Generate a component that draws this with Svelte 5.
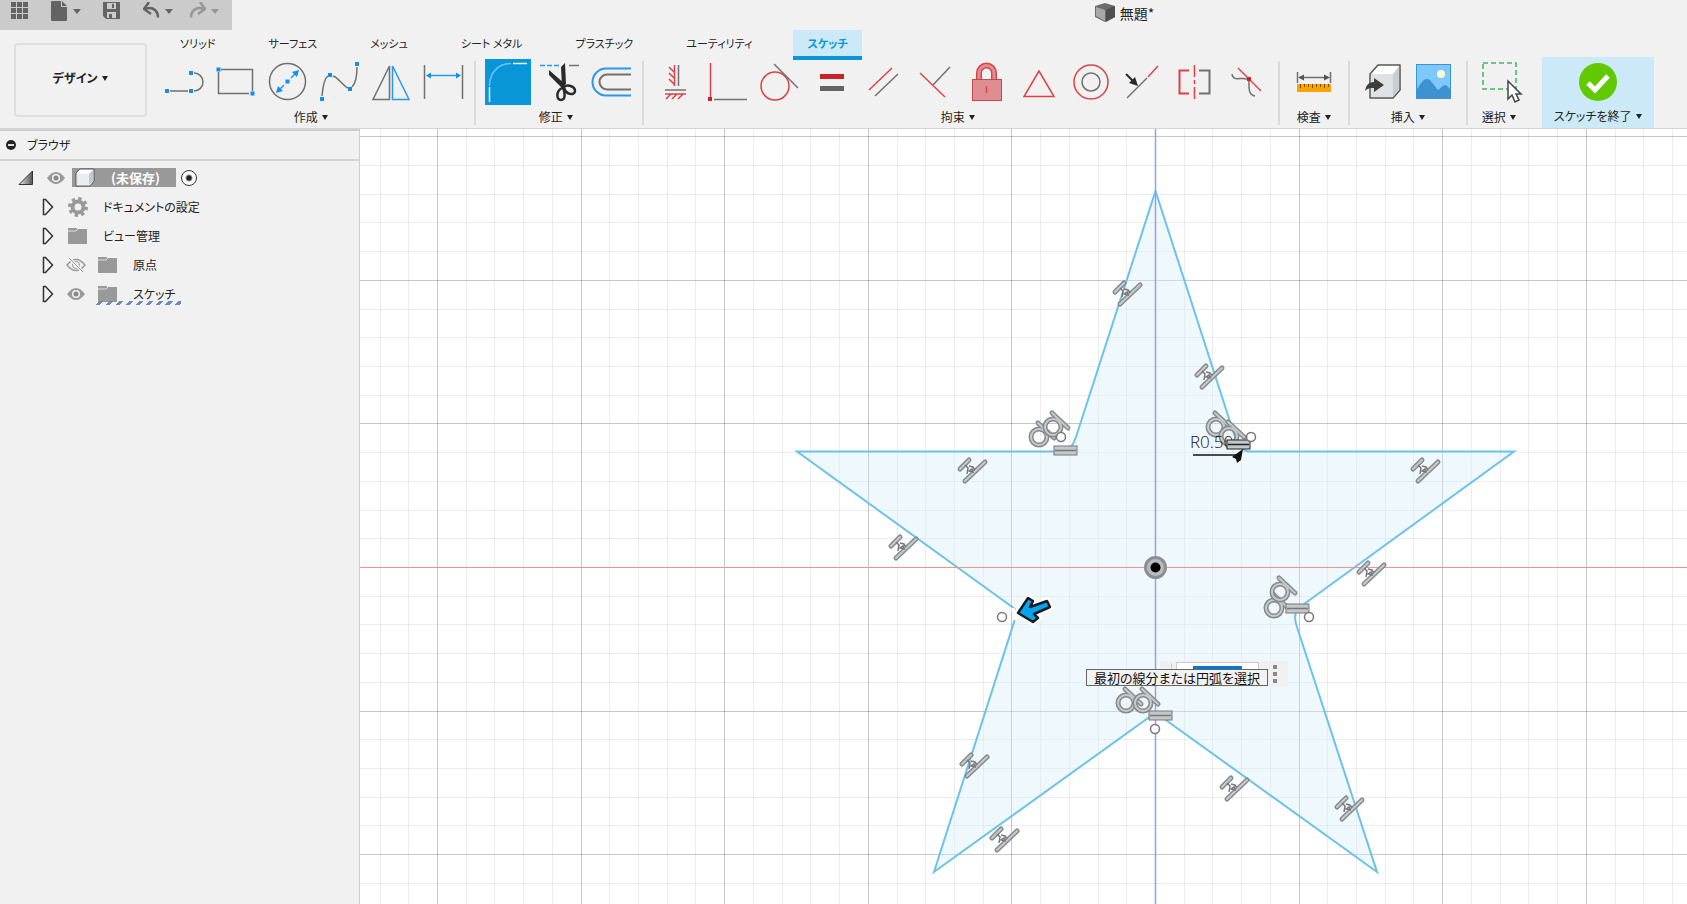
<script>
	const tabs = ['ソリッド', 'サーフェス', 'メッシュ', 'シート メタル', 'プラスチック', 'ユーティリティ', 'スケッチ'];
	let active = 'スケッチ';

	// icon art is drawn on a 52x46 box: g = grey, b = blue, r = red strokes, *f = filled
	const dot = (x, y) => `<rect class="bf" x="${x - 2}" y="${y - 2}" width="4" height="4"/>`;

	const groups = [
		{
			label: '作成',
			tools: [
				{ name: '線分', art: '<path class="g" d="M12 32H30M36 32a9 9 0 0 0 0-18"/>' + dot(9, 32) + dot(33, 32) + dot(33, 14) },
				{ name: '長方形', art: '<path class="g" d="M11 10.500H42.500V32M39 34.500H8.500V13"/>' + dot(8.5, 10.5) + dot(42.5, 34.5) },
				{ name: '円', art: '<circle class="g" cx="25.500" cy="22.500" r="18"/><path class="b" d="M29 19l5-5M22 26l-5 5"/><path class="bf" d="M37 11l-2 7-5-5zM14 34l2-7 5 5z"/>' + dot(25.5, 22.5) },
				{ name: 'スプライン', art: '<path class="g" d="M8 37C9 26 11 19 14 17M19 17c6 2 10 10 15 12M38 28c3-3 5-10 5-20"/>' + dot(8, 40) + dot(16, 16) + dot(36, 30) + dot(43, 5) },
				{ name: 'ミラー', art: '<path class="g" d="M23.500 7V40.500H7z"/><path class="b" d="M26.500 7V40.500H43z"/>' },
				{ name: 'スケッチ寸法', art: '<path class="g" d="M6.500 6V40M44.500 6V40"/><path class="b" d="M10 16.500H41"/><path class="bf" d="M8 16.500l5-3v6zM43 16.500l-5-3v6z"/>' }
			]
		},
		{
			label: '修正',
			tools: [
				{ name: 'フィレット', on: true, art: '<rect x="4" y="0" width="46" height="46" fill="#0896d9"/><path class="lb" d="M8.500 27C8.500 14 17 4.500 30 4.500"/><path class="w" d="M8.500 28V43M32 4.500H46"/>' },
				{ name: 'トリム', art: '<path class="b" stroke-dasharray="5 2" d="M7 6.500H27"/><path class="g" d="M36 6.500H46"/><path fill="#2a2a2a" d="M28 8l4-4 1 21-4 3zM16 11l16 14-2 5-14-14z"/><path fill="none" stroke="#2a2a2a" stroke-width="2.500" d="M29 29c-6 3-6 12-1 12s4-8 2-12zM31 28c1 8 11 9 11 4s-8-7-11-4z"/>' },
				{ name: 'オフセット', art: '<path class="b t" d="M46 9.500H21a13.500 13.500 0 0 0 0 27h25"/><path class="g t" d="M46 15.500H22a7.500 7.500 0 0 0 0 15h24"/>' }
			]
		},
		{
			label: '拘束',
			tools: [
				{ name: '水平/垂直', art: '<path class="g" d="M29.500 6V27M16 31H37"/><path class="r" d="M25.500 6V27M25 13l-5-5M25 19l-5-5M25 25l-5-5M16 35H37M22 35l-5 5M28 35l-5 5M34 35l-5 5"/>' },
				{ name: '一致', art: '<path class="r" d="M9.500 4V38"/><path class="g" d="M13 40.500H46"/><rect class="rf" x="7" y="38" width="4" height="4"/>' },
				{ name: '接線', art: '<circle class="r" cx="22" cy="27" r="14"/><path class="g" d="M21 5L45 29"/>' },
				{ name: '等しい', art: '<rect class="rf" x="15" y="15" width="24" height="5"/><rect fill="#636363" x="15" y="27" width="24" height="5"/>' },
				{ name: '平行', art: '<path class="r" d="M12 31L35 9"/><path class="g" d="M18 37L41 15"/>' },
				{ name: '直交', art: '<path class="r" d="M11 14L36 38"/><path class="g" d="M41 8L24 26"/>' },
				{ name: '固定', art: '<path fill="none" stroke="#d0464b" stroke-width="6" d="M18 20V14a7.500 7.500 0 0 1 15 0v6"/><path fill="none" stroke="#e48d90" stroke-width="3" d="M18 20V14a7.500 7.500 0 0 1 15 0v6"/><rect x="11.500" y="20.500" width="29" height="21" fill="#de8d90" stroke="#c9484d"/><path class="r" d="M25.500 27V34"/>' },
				{ name: '中点', art: '<path class="r" d="M26 12L11 37.500H41z"/>' },
				{ name: '同心円', art: '<circle class="r" cx="26" cy="23" r="17"/><circle class="g" cx="26" cy="23" r="9"/>' },
				{ name: '同一直線上', art: '<path class="g" d="M10 39L30 19"/><path class="r" d="M31 18L41 7"/><path fill="none" stroke="#2a2a2a" stroke-width="2" d="M9 15l7 7"/><path fill="#2a2a2a" d="M21 27l-9-3 6-6z"/>' },
				{ name: '対称', art: '<path class="r t" d="M20 11.500H10.500V34.500H20"/><path class="r" d="M25.500 6V18M25.500 21V25M25.500 28V40"/><path class="g t" d="M30 11.500H40.500V34.500H30"/>' },
				{ name: '曲率', art: '<path class="g" d="M11 15c1 8 9 3 15 5M28 22c0 6-1 14 6 15"/><path class="r" d="M17 9L40 32"/><rect class="rf" x="26" y="18" width="4" height="4"/>' }
			]
		},
		{
			label: '検査',
			size: 'pad',
			tools: [
				{ name: '計測', art: '<path class="g" d="M9.500 13V24M42.500 13V24M12 18.500H40"/><path fill="#555" d="M10 18.500l6-3v6zM42 18.500l-6-3v6z"/><rect x="9" y="25" width="34" height="8" fill="#f9a400"/><path stroke="#7a4c00" d="M12.500 25v4M16.500 25v3M20.500 25v3M24.500 25v4M28.500 25v3M32.500 25v3M36.500 25v4M40.500 25v3"/>' }
			]
		},
		{
			label: '挿入',
			size: 'pad mid',
			tools: [
				{ name: '派生を挿入', art: '<path d="M12 15l8-9H42V31l-7 8H12z" fill="#fff" stroke="#555" stroke-width="1.500" stroke-linejoin="round"/><path d="M13 15H35V38H13z" fill="#dfe2e5"/><path d="M35 15l6-8v24l-6 7z" fill="#c9cdd1"/><path fill="#3d3d3d" d="M7 32c1-6 4-9 9-9v-4l10 7-10 7v-4c-4 0-6 0-9 3z"/>' },
				{ name: 'キャンバス', art: '<rect x="8.500" y="5.500" width="34" height="34" fill="#7cc8ff" stroke="#3b93d6"/><path d="M9 30c3-4 6-10 10-10s8 8 11 11c3-2 5-5 7-5s4 3 5 4v9H9z" fill="#3d92cf"/><circle cx="33" cy="15" r="4" fill="#fffbd0"/>' }
			]
		},
		{
			label: '選択',
			size: 'pad small',
			tools: [
				{ name: '選択', art: '<rect x="7" y="4" width="33" height="26" fill="none" stroke="#39b860" stroke-width="1.500" stroke-dasharray="5 3"/><path d="M32 22V40l4-4 3 7 4-2-3-6h5z" fill="#fff" stroke="#444" stroke-width="1.500"/>' }
			]
		}
	];

	const tree = [
		{ name: 'ドキュメントの設定', icon: 'gear' },
		{ name: 'ビュー管理', icon: 'folder' },
		{ name: '原点', icon: 'folder', eye: 'off' },
		{ name: 'スケッチ', icon: 'folder', eye: 'on', marked: true }
	];

	// everything on the canvas is measured from the sketch origin
	const step = 28.72;
	const lines = Array.from({ length: 101 }, (_, i) => i - 50);
	const pos = (n) => Math.round(n * step) + 0.5;

	const midpoints = [
		[-28, -274], [54, -191], [-183, -97], [270, -97], [-252, -20],
		[216, 6], [-181, 198], [-151, 272], [79, 221], [194, 241]
	];
	const tangents = [
		[-116, -130], [-102, -140], [61, -140], [74, -131],
		[119, 41], [125, 25], [-29, 136], [-12, 136]
	];
	const equals = [[-101, -121], [72, -127, true], [131, 37], [-6, 144]];
	const centers = [[-94, -130], [96, -130], [-153, 50], [154, 50], [0, 162]];
</script>

{#snippet eye(off)}
	<svg class="eye" width="20" height="16" viewBox="0 0 20 16">
		{#if off}
			<path d="M1 8q9-11 18 0q-9 11-18 0z" fill="none" stroke="#999" stroke-width="1.500" />
			<circle cx="10" cy="8" r="3.500" fill="none" stroke="#999" />
			<path d="M3 1L17 15" stroke="#f1f1f1" stroke-width="3" />
			<path d="M3 1L17 15" stroke="#999" />
		{:else}
			<path d="M1 8q9-12 18 0q-9 12-18 0z" fill="#999" />
			<circle cx="10" cy="8" r="4" fill="#f1f1f1" />
			<circle cx="10" cy="8" r="2.500" fill="#888" />
		{/if}
	</svg>
{/snippet}

<div class="app">
	<header>
		<div class="top">
			<nav class="quick">
				<button aria-label="データ パネル">
					<svg width="18" height="18"><path fill="#636363" d="M0 0h5v5H0zM6 0h5v5H6zM12 0h5v5h-5zM0 6h5v5H0zM6 6h5v5H6zM12 6h5v5h-5zM0 12h5v5H0zM6 12h5v5H6zM12 12h5v5h-5z" /></svg>
				</button>
				<button class="menu" aria-label="ファイル">
					<svg width="17" height="20"><path fill="#636363" d="M0 1q0-1 1-1h9v6h6v13q0 1-1 1H1q-1 0-1-1zM11 0l5 5h-5z" /></svg>
					<span class="caret"></span>
				</button>
				<button class="save" aria-label="保存">
					<svg width="18" height="18"><path fill="#636363" fill-rule="evenodd" d="M0 0h17v17H3l-3-3zM4 1v6h9V1zM4 10v6h9v-6z" /><path fill="#636363" d="M9 2h2v4H9zM6 12h3v4H6z" /></svg>
				</button>
				<button class="menu" aria-label="元に戻す">
					<svg width="17" height="18"><path d="M3 6.500c8-2 12 3 12 9" fill="none" stroke="#636363" stroke-width="2.500" /><path d="M6 0L1 7l7 5" fill="none" stroke="#636363" stroke-width="2.500" /></svg>
					<span class="caret"></span>
				</button>
				<button class="menu dim" aria-label="やり直し">
					<svg width="17" height="18"><path d="M14 6.500c-8-2-12 3-12 9" fill="none" stroke="#636363" stroke-width="2.500" /><path d="M11 0l5 7-7 5" fill="none" stroke="#636363" stroke-width="2.500" /></svg>
					<span class="caret"></span>
				</button>
			</nav>
			<div class="title">
				<svg width="20" height="19"><path fill="#6b6b6b" d="M0 3l10-3 10 3v11l-10 5-10-5z" /><path fill="#a8a8a8" d="M1 4l9 3v11l-9-5z" /><path fill="#4f4f4f" d="M11 7l9-4v11l-9 5z" /></svg>
				<span>無題*</span>
			</div>
		</div>

		<div class="ribbon">
			<button class="workspace">デザイン <span class="caret"></span></button>
			<div class="panels">
				<nav class="tabs">
					{#each tabs as tab}
						<button class:active={tab === active} on:click={() => (active = tab)}>{tab}</button>
					{/each}
				</nav>
				<div class="groups">
					{#each groups as group}
						<section class="group {group.size ?? ''}">
							<div class="tools">
								{#each group.tools as tool}
									<button class="tool" aria-label={tool.name} aria-pressed={!!tool.on}>
										<svg width="52" height="46" viewBox="0 0 52 46">{@html tool.art}</svg>
									</button>
								{/each}
							</div>
							<button class="label">{group.label} <span class="caret"></span></button>
						</section>
					{/each}
					<button class="finish">
						<svg width="46" height="46"><circle cx="23" cy="23" r="19" fill="#62c900" /><path d="M13 24l7 7 13-14" fill="none" stroke="#fff" stroke-width="5" /></svg>
						<span class="label">スケッチを終了 <span class="caret"></span></span>
					</button>
				</div>
			</div>
		</div>
	</header>

	<main>
		<aside>
			<h2>
				<svg width="12" height="12"><circle cx="6" cy="6" r="5" fill="#222" /><path d="M3 6h6" stroke="#ddd" stroke-width="2" /></svg>
				ブラウザ
			</h2>
			<ul>
				<li class="root">
					<svg width="16" height="16"><defs><linearGradient id="fold"><stop offset="0" stop-color="#eee" /><stop offset="1" stop-color="#555" /></linearGradient></defs><path d="M1 14.500L14.500 1V14.500z" fill="url(#fold)" stroke="#333" /></svg>
					{@render eye(false)}
					<span class="doc">
						<svg width="20" height="19"><path d="M1 5l4-4h14v12l-4 5H1z" fill="#fff" stroke="#555" stroke-linejoin="round" /><path d="M2 6h12v11H2z" fill="#e9edf0" /><path d="M14 6l4-4v11l-4 4z" fill="#c3c8cc" /></svg>
						<b>(未保存)</b>
					</span>
					<input type="radio" aria-label="コンポーネントをアクティブ化" checked />
				</li>
				{#each tree as node}
					<li>
						<svg width="12" height="18"><path d="M1.500 1.500h2l7 7.500-7 7.500h-2z" fill="#f4f4f4" stroke="#333" stroke-width="1.500" /></svg>
						{#if node.eye}{@render eye(node.eye === 'off')}{/if}
						<span class="node" class:marked={node.marked}>
							{#if node.icon === 'gear'}
								<svg width="20" height="20"><circle cx="10" cy="10" r="8" fill="none" stroke="#999" stroke-width="4" stroke-dasharray="3.140 3.140" /><circle cx="10" cy="10" r="5.500" fill="none" stroke="#999" stroke-width="4" /></svg>
							{:else}
								<svg width="20" height="16"><path d="M0 0h8l2 1H19V16H0z" fill="#999" /><path d="M0 3h8l2-2" fill="none" stroke="#ddd" /></svg>
							{/if}
							{node.name}
						</span>
					</li>
				{/each}
			</ul>
		</aside>

		<div class="canvas">
			<svg class="sketch">
				<defs>
					<g id="mid">
						<path class="edge" d="M-12-1l9-9M-7 11L13-8" />
						<path class="core" d="M-12-1l9-9M-7 11L13-8" />
						<path d="M-7-5l3 3-1 6M-3-4l4 1 2 3M-3 1l3-2 1 3z" fill="none" stroke="#777" stroke-width="1.500" />
					</g>
					<g id="tan">
						<circle class="edge" r="8" />
						<path class="edge" d="M-1-14L15 1" />
						<circle class="core" r="8" />
						<path class="core" d="M-1-14L15 1" />
					</g>
				</defs>
				<g transform="translate(795 438)">
					{#each lines as n}
						<path class="grid" class:major={n % 5 === 0} d="M{pos(n)}-2000V2000M-2000 {pos(n)}H2000" />
					{/each}
					<path class="star" d="M.5-376L80-130Q84.500-115.500 95-115.500H359L145 40Q137 46 142 60L222 305L8 151Q0 144-7 151L-221 305L-139 49Q-137 45-140 42L-358-115.500H-93Q-84-115.500-79-130Z" />
					<path d="M-142 41l3 12" stroke="#fff" stroke-width="4" />
					<path d="M-2000 .5H2000" stroke="#fa8f8f" />
					<path d="M.5-2000V2000" stroke="#9a9afa" stroke-width="1.500" />

					{#each midpoints as [x, y]}
						<use href="#mid" {x} {y} />
					{/each}
					{#each tangents as [x, y]}
						<use href="#tan" {x} {y} />
					{/each}
					<text x="35" y="-119">R0.50</text>
					{#each equals as [x, y, dark]}
						<g transform="translate({x} {y})" class:dark>
							<rect width="23" height="9" fill="#c4c8cb" stroke="#777" />
							<path d="M1 4.500H22" stroke="#777" stroke-width="1.500" />
						</g>
					{/each}
					{#each centers as [x, y]}
						<circle cx={x} cy={y} r="4.500" fill="#fff" stroke="#777" stroke-width="1.500" />
					{/each}
					<path d="M38-112H84" stroke="#111" stroke-width="1.500" />
					<path d="M88-118l-11 8 4 2 1 4 4-3z" fill="#111" />
					<g transform="translate(.5 .5)">
						<circle r="10" fill="#b8bcbe" stroke="#8a8f92" stroke-width="3" />
						<circle r="5" fill="#000" />
					</g>
					<g stroke-linejoin="round">
						<path d="M-137 46L-127 31L-122 34L-125 40L-108 34L-105 40L-121 47L-117 51L-122 55Z" fill="#fff" stroke="#fff" stroke-width="7" />
						<path d="M-137 46L-127 31L-122 34L-125 40L-108 34L-105 40L-121 47L-117 51L-122 55Z" fill="#05a4ef" stroke="#161b20" stroke-width="2.500" />
					</g>
				</g>
			</svg>
			<div class="radius">
				<span class="grip"></span>
				<input type="text" aria-label="フィレット半径" />
				<button aria-label="その他"><svg width="4" height="18"><path fill="#888" d="M0 0h4v4H0zM0 7h4v4H0zM0 14h4v4H0z" /></svg></button>
			</div>
			<div class="hint" role="tooltip">最初の線分または円弧を選択</div>
		</div>
	</main>
</div>

<style>
	:global(body) {
		background: #f1f1f1;
	}

	.app {
		display: flex;
		flex-direction: column;
		height: 100vh;
		overflow: hidden;
		font-family: "Noto Sans CJK JP", sans-serif;
		font-feature-settings: "palt";
		font-size: 12px;
		line-height: 16px;
		color: #222;
	}

	button {
		border: 0;
		padding: 0;
		background: none;
		font: inherit;
		color: inherit;
		white-space: nowrap;
	}

	svg {
		display: block;
		flex-shrink: 0;
	}

	.caret {
		display: inline-block;
		margin-left: 2px;
		border: 3px solid transparent;
		border-top: 5px solid #222;
		border-bottom: 0;
		vertical-align: 2px;
	}

	header {
		background: #f1f1f1;
		border-bottom: 1px solid #d4d4d4;
	}

	.top {
		display: flex;
		height: 30px;
	}

	.top::after {
		content: '';
		flex: 8;
	}

	.quick {
		display: flex;
		align-items: center;
		gap: 22px;
		box-sizing: border-box;
		width: 232px;
		padding: 0 0 8px 11px;
		background: #cbcbcb;
	}

	.quick button {
		display: flex;
		align-items: center;
	}

	.quick .menu {
		gap: 3px;
		margin-right: -6px;
	}

	.quick .save {
		margin-left: 6px;
	}

	.quick .caret {
		border-width: 5px 4px 0;
		border-top-color: #636363;
	}

	.dim {
		opacity: 0.5;
	}

	.title {
		display: flex;
		flex: 13;
		justify-content: flex-end;
		align-items: center;
		gap: 5px;
		margin-right: -35px;
		padding-bottom: 5px;
		font-size: 14px;
	}

	.ribbon {
		display: flex;
	}

	.workspace {
		width: 133px;
		height: 74px;
		margin: 13px 11px 0 14px;
		padding-bottom: 4px;
		border: 2px solid #dedede;
		border-radius: 4px;
		font-weight: bold;
	}

	.tabs {
		display: flex;
		gap: 53px;
		height: 27px;
		padding-left: 22px;
		font-size: 11px;
	}

	.tabs button {
		height: 26px;
	}

	.tabs .active {
		height: 30px;
		margin-left: -12px;
		padding: 0 14px;
		box-sizing: border-box;
		background: #cbe9f7;
		border-bottom: 4px solid #0896d9;
		color: #0896d9;
		font-weight: bold;
	}

	.groups {
		display: flex;
	}

	.group {
		position: relative;
		padding: 2px 5px 0;
		border-right: 2px solid #dadada;
		border-image: linear-gradient(#f1f1f1 5px, #dadada 5px 67px, #f1f1f1 67px) 1;
	}

	.group:first-child {
		padding: 2px 4px 0 0;
	}

	.group:last-of-type {
		border-right: 0;
		margin-right: 12px;
	}

	.pad {
		padding: 2px 8px 0;
	}

	.tools {
		display: flex;
	}

	.tool {
		width: 52px;
		height: 46px;
	}

	.mid .tool {
		width: 50px;
	}

	.small .tool {
		width: 46px;
	}

	.tool svg {
		overflow: visible;
	}

	.tool :global(.g),
	.tool :global(.b),
	.tool :global(.r),
	.tool :global(.w),
	.tool :global(.lb) {
		fill: none;
		stroke: #707070;
		stroke-width: 1.5;
	}

	.tool :global(.b) {
		stroke: #2b98ee;
	}

	.tool :global(.r) {
		stroke: #db4347;
	}

	.tool :global(.w) {
		stroke: #e8f6ff;
	}

	.tool :global(.lb) {
		stroke: #6fc2ff;
	}

	.tool :global(.t) {
		stroke-width: 2;
	}

	.tool :global(.bf) {
		fill: #118ff0;
	}

	.tool :global(.rf) {
		fill: #cf2226;
	}

	.label {
		display: block;
		width: 100%;
		height: 23px;
		line-height: 22px;
		text-align: center;
	}

	.group .label {
		padding-right: 6px;
	}

	.pad .label {
		padding-right: 0;
	}

	.finish {
		display: flex;
		flex-direction: column;
		align-items: center;
		width: 112px;
		padding-top: 2px;
		background: #cbe9f7;
	}

	main {
		display: flex;
		flex: 1;
		min-height: 0;
	}

	aside {
		width: 359px;
		flex-shrink: 0;
		border-top: 2px solid #cecece;
		border-right: 1px solid #cecece;
		background: #f1f1f1;
	}

	h2 {
		display: flex;
		align-items: center;
		gap: 10px;
		height: 28px;
		margin: 0;
		padding-left: 5px;
		border-bottom: 2px solid #d4d4d4;
		font-size: 12px;
		font-weight: normal;
	}

	ul {
		margin: 0;
		padding: 2px 0 0;
		list-style: none;
	}

	li {
		display: flex;
		align-items: center;
		gap: 12px;
		height: 29px;
		padding-left: 42px;
	}

	.root {
		padding-left: 18px;
	}

	.eye {
		margin-right: -2px;
	}

	.doc {
		display: flex;
		align-items: center;
		gap: 16px;
		box-sizing: border-box;
		width: 104px;
		height: 19px;
		margin-left: -4px;
		padding-left: 3px;
		background: #999;
		color: #fff;
		font-size: 13px;
	}

	.root input {
		appearance: none;
		width: 16px;
		height: 16px;
		margin: 0 0 0 -7px;
		border: 1px solid #333;
		border-radius: 50%;
		background: radial-gradient(#222 2px, #fff 4px);
	}

	.node {
		display: flex;
		align-items: center;
		gap: 15px;
		margin-left: 2px;
	}

	.marked {
		position: relative;
	}

	.marked::after {
		content: '';
		position: absolute;
		inset: auto -6px -3px -4px;
		height: 4px;
		background: repeating-linear-gradient(135deg, transparent 0 4px, #6f8bb5 4px 7px);
	}

	.canvas {
		position: relative;
		flex: 1;
		min-width: 0;
		background: #fff;
	}

	.sketch {
		width: 100%;
		height: 100%;
	}

	.grid {
		stroke: #000;
		stroke-opacity: 0.07;
	}

	.major {
		stroke-opacity: 0.22;
	}

	.star {
		fill: #d8eefb;
		fill-opacity: 0.4;
		stroke: #6cc3ea;
		stroke-width: 2;
	}

	.edge {
		fill: none;
		stroke: #868a8c;
		stroke-width: 5;
		stroke-linecap: round;
	}

	.core {
		fill: none;
		stroke: #c6cacc;
		stroke-width: 2;
		stroke-linecap: round;
	}

	.dark rect,
	.dark path {
		stroke: #222;
	}

	.sketch text {
		font-family: "Open Sans", sans-serif;
		font-size: 17px;
		font-weight: 300;
		fill: #111;
	}

	.radius {
		position: absolute;
		left: 800px;
		top: 532px;
		display: flex;
		gap: 4px;
		width: 128px;
		height: 26px;
		background: #f0f0f0;
	}

	.grip {
		width: 11px;
		margin: 2px 0;
		border-right: 1px solid #ccc;
	}

	.radius input {
		box-sizing: border-box;
		width: 83px;
		height: 22px;
		margin-top: 1px;
		border: 1px solid #ccc;
		background: linear-gradient(#0078d7, #0078d7) 16px 3px / 49px 14px no-repeat #fff;
	}

	.radius button {
		padding: 0 10px;
	}

	.hint {
		position: absolute;
		left: 726px;
		top: 540px;
		border: 1px solid #666;
		padding: 0 7px;
		background: #f3f3f3;
		color: #111;
		font-size: 13px;
		line-height: 15px;
		white-space: nowrap;
	}
</style>
